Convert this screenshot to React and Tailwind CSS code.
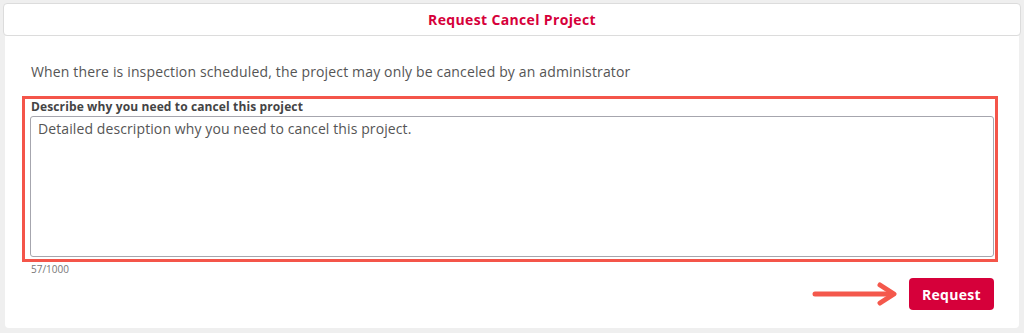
import React from 'react';

const ArrowRight = () => (
    <svg width="86" height="24" viewBox="0 0 86 24" fill="none">
        <path d="M3 12 H80" stroke="#f4584c" strokeWidth="5" strokeLinecap="round" />
        <path d="M68 3 L82 12 L68 21" stroke="#f4584c" strokeWidth="5" strokeLinecap="round" strokeLinejoin="round" />
    </svg>
);

const App = () => {
    return (
        <div className="h-[333px] bg-[#efefef] pt-[3px] px-[3px] font-['Open_Sans',sans-serif]">
            {/* Header */}
            <div className="h-[33px] bg-white border border-[#dcdcdc] rounded-[4px] flex items-center justify-center">
                <h1 className="text-[14px] tracking-[0.35px] font-bold text-[#d6003a]">Request Cancel Project</h1>
            </div>

            {/* Body */}
            <div className="mx-[2px] h-[292px] bg-white rounded-b-[4px] pt-[27px]">
                <p className="pl-[26px] text-[14px] leading-[18px] tracking-[0.15px] text-[#555]">
                    When there is inspection scheduled, the project may only be canceled by an administrator
                </p>

                <div className="mt-[15px] ml-[17px] mr-[21px] border-[3px] border-[#f4554a] pl-[5px] pr-[1px] pb-[2px] pt-[1px]">
                    <label className="block pl-[1px] text-[12px] leading-[14px] tracking-[0.12px] font-bold text-[#444]">
                        Describe why you need to cancel this project
                    </label>
                    <textarea
                        className="mt-[2px] block w-full h-[141px] resize-none border border-[#a6a6ae] rounded-[3px] px-[7px] pt-[2px] text-[14px] leading-[20px] tracking-[0.1px] text-[#555] outline-none"
                        defaultValue="Detailed description why you need to cancel this project."
                    />
                </div>

                <div className="pl-[26px] mt-[1px] text-[10px] leading-[12px] text-[#777]">57/1000</div>

                <div className="mt-[3px] mr-[25px] flex justify-end items-center gap-[11px]">
                    <ArrowRight />
                    <button className="w-[85px] h-[32px] bg-[#d6003a] rounded-[4px] text-white text-[14px] tracking-[0.3px] font-bold">
                        Request
                    </button>
                </div>
            </div>
        </div>
    );
};

export default App;
